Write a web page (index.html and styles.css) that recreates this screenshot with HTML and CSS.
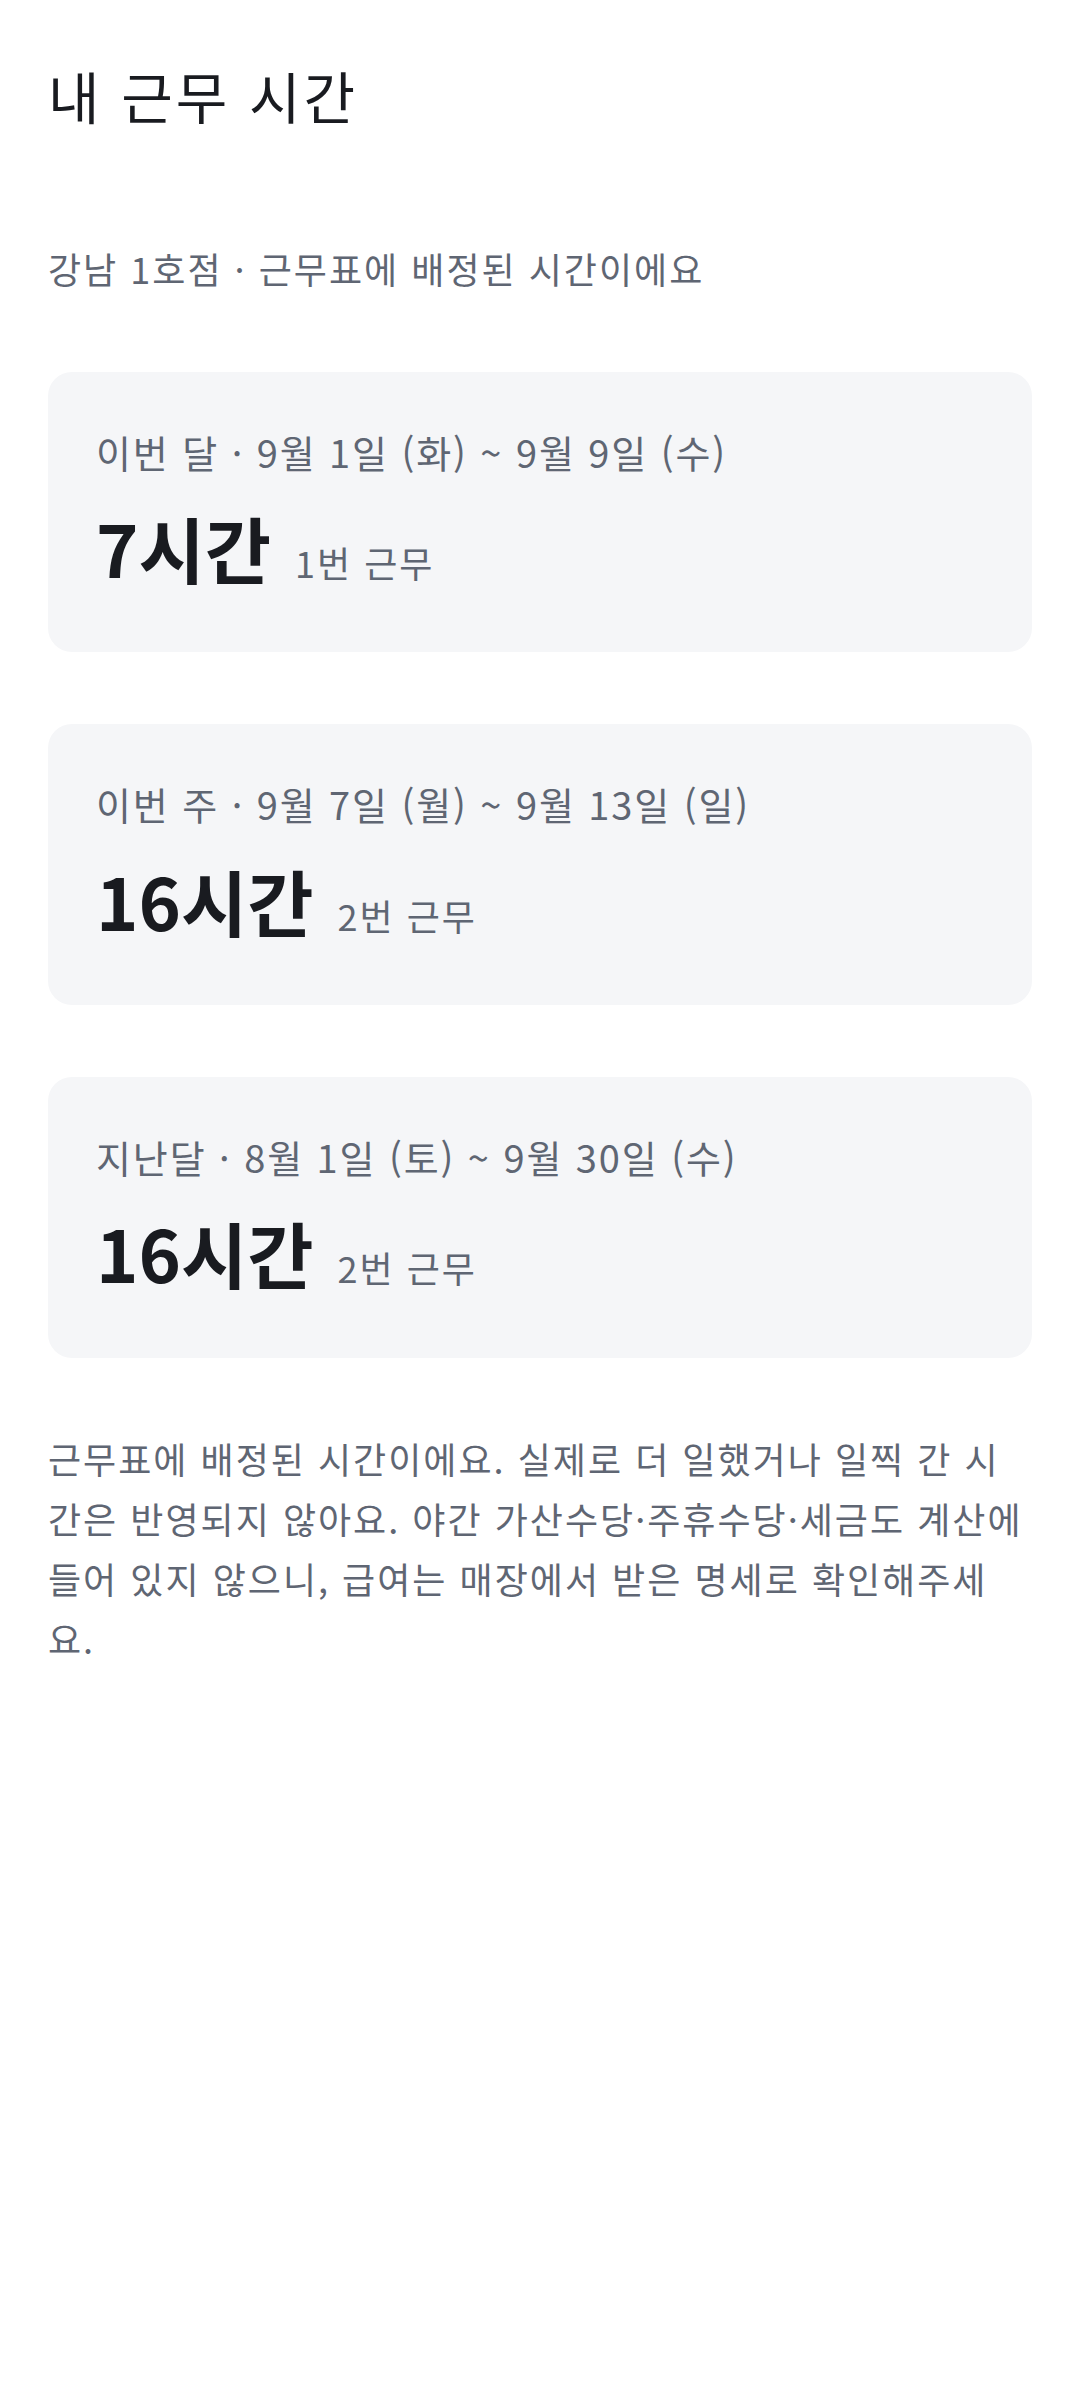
FILE: index.html
```html
<!DOCTYPE html>
<html lang="ko">
<head>
    <meta charset="UTF-8">
    <title>내 근무 시간</title>
    <link rel="stylesheet" href="styles.css">
</head>
<body>
    <div class="page">
        <h1 class="title">내 근무 시간</h1>
        <p class="subtitle">강남 1호점 · 근무표에 배정된 시간이에요</p>

        <div class="summary-list">
            <div class="summary-card">
                <div class="period">이번 달 · 9월 1일 (화) ~ 9월 9일 (수)</div>
                <div class="total">
                    <span class="hours">7시간</span>
                    <span class="shifts">1번 근무</span>
                </div>
            </div>

            <div class="summary-card">
                <div class="period">이번 주 · 9월 7일 (월) ~ 9월 13일 (일)</div>
                <div class="total">
                    <span class="hours">16시간</span>
                    <span class="shifts">2번 근무</span>
                </div>
            </div>

            <div class="summary-card">
                <div class="period">지난달 · 8월 1일 (토) ~ 9월 30일 (수)</div>
                <div class="total">
                    <span class="hours">16시간</span>
                    <span class="shifts">2번 근무</span>
                </div>
            </div>
        </div>

        <p class="notice">근무표에 배정된 시간이에요. 실제로 더 일했거나 일찍 간 시간은 반영되지 않아요. 야간 가산수당·주휴수당·세금도 계산에 들어 있지 않으니, 급여는 매장에서 받은 명세로 확인해주세요.</p>
    </div>
</body>
</html>
```

FILE: styles.css
```css
* {
    margin: 0;
    padding: 0;
    box-sizing: border-box;
}

body {
    font-family: "Noto Sans CJK KR", "Noto Sans", sans-serif;
    background: #ffffff;
    color: #191b20;
}

.page {
    padding: 56px 48px 48px;
}

.title {
    font-size: 56px;
    font-weight: 400;
    line-height: 1.4;
    letter-spacing: 3px;
    color: #191b20;
}

.subtitle {
    margin-top: 109px;
    font-size: 36px;
    line-height: 1.4;
    letter-spacing: 2px;
    color: #5f6673;
}

.summary-list {
    display: flex;
    flex-direction: column;
    gap: 72px;
    margin-top: 78px;
}

.summary-card {
    background: #f5f6f8;
    border-radius: 24px;
    padding: 53px 48px 62px;
}

.period {
    font-size: 38px;
    line-height: 1.4;
    letter-spacing: 1.9px;
    color: #5f6673;
}

.total {
    display: flex;
    align-items: baseline;
    gap: 24px;
    margin-top: 26px;
}

.hours {
    font-size: 72px;
    font-weight: 700;
    line-height: 1.2;
    color: #191b20;
}

.shifts {
    font-size: 36px;
    letter-spacing: 2px;
    color: #5f6673;
}

.notice {
    margin-top: 70px;
    font-size: 36px;
    line-height: 60px;
    letter-spacing: 2px;
    color: #5f6673;
    word-break: break-all;
}
```
